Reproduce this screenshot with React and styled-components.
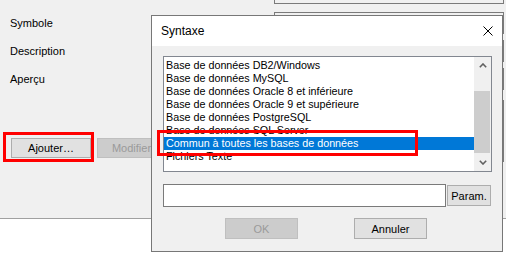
import React from 'react';
import styled, { createGlobalStyle } from 'styled-components';

const Global = createGlobalStyle`
  html, body { margin: 0; padding: 0; background: #ffffff; }
  body { font-family: "Liberation Sans", Arial, sans-serif; font-size: 11px; color: #000; }
  * { box-sizing: border-box; }
`;

const Screen = styled.div`
  position: relative;
  width: 506px;
  height: 257px;
  overflow: hidden;
  background: #ffffff;
`;

const FormPanel = styled.div`
  height: 219px;
  background: #f0f0f0;
  border-bottom: 1px solid #a0a0a0;
  padding-left: 10px;
  overflow: hidden;
  display: flex;
  flex-direction: column;
`;

const FieldRow = styled.div`
  display: flex;
  align-items: stretch;
  flex-shrink: 0;
  height: ${p => p.$h}px;
  margin-top: ${p => p.$mt}px;
`;

const LabelCell = styled.div`
  width: 264px;
  display: flex;
  align-items: ${p => (p.$end ? 'flex-end' : 'center')};
  padding-bottom: ${p => (p.$end ? 4 : 0)}px;
  gap: 6px;
  font-size: 11px;
`;

const FieldBox = styled.div`
  width: 230px;
  border: 1px solid #7a7a7a;
  background: #f0f0f0;
`;

const WinButton = styled.button`
  font-family: "Liberation Sans", Arial, sans-serif;
  font-size: 11px;
  width: ${p => p.$w}px;
  height: ${p => p.$h || 21}px;
  padding: 0;
  margin: 0;
  border: 1px solid ${p => (p.disabled ? '#bfbfbf' : '#adadad')};
  background: ${p => (p.disabled ? '#cccccc' : '#e1e1e1')};
  color: ${p => (p.disabled ? '#9a9a9a' : '#000')};
  display: flex;
  align-items: center;
  justify-content: center;
  flex-shrink: 0;
`;

const FirstButton = styled(WinButton)`
  margin-left: 1px;
`;

const Dialog = styled.div`
  position: absolute;
  left: 151px;
  top: 15px;
  width: 352px;
  height: 237px;
  border: 1px solid #777777;
  background: #f0f0f0;
  display: flex;
  flex-direction: column;
`;

const TitleBar = styled.div`
  height: 30px;
  flex-shrink: 0;
  background: #ffffff;
  display: flex;
  align-items: center;
  justify-content: space-between;
  padding: 0 9px 0 9px;
  font-size: 12px;
`;

const DialogBody = styled.div`
  flex: 1;
  display: flex;
  flex-direction: column;
  padding: 10px 10px 12px 11px;
`;

const ListBox = styled.div`
  width: 329px;
  height: 116px;
  border: 1px solid #828790;
  background: #ffffff;
  display: flex;
  flex-shrink: 0;
`;

const Items = styled.div`
  flex: 1;
  padding-top: 2px;
  overflow: hidden;
`;

const Item = styled.div`
  height: 13px;
  line-height: 13px;
  padding-left: 2px;
  white-space: nowrap;
  font-size: 10.75px;
  background: ${p => (p.$selected ? '#0078d7' : 'transparent')};
  color: ${p => (p.$selected ? '#ffffff' : '#000000')};
`;

const ScrollBar = styled.div`
  width: 17px;
  background: #f0f0f0;
  display: flex;
  flex-direction: column;
`;

const ArrowButton = styled.div`
  height: 17px;
  display: flex;
  align-items: center;
  justify-content: center;
  flex-shrink: 0;
`;

const Track = styled.div`
  flex: 1;
  padding: 17px 1px 0 0;
`;

const Thumb = styled.div`
  height: 62px;
  background: #cdcdcd;
`;

const EditRow = styled.div`
  display: flex;
  align-items: center;
  gap: 1px;
  margin-top: 12px;
`;

const Edit = styled.div`
  width: 283px;
  height: 23px;
  border: 1px solid #7a7a7a;
  background: #ffffff;
`;

const ActionRow = styled.div`
  display: flex;
  gap: 56px;
  margin-top: 11px;
  padding-left: 62px;
`;

const Highlight = styled.div`
  position: absolute;
  left: ${p => p.$x}px;
  top: ${p => p.$y}px;
  width: ${p => p.$w}px;
  height: ${p => p.$h}px;
  border: 3px solid #ff0000;
  pointer-events: none;
`;

const Chevron = ({ up }) => (
  <svg width="8" height="5" viewBox="0 0 8 5">
    <polyline
      points={up ? '0.8,4.2 4,1 7.2,4.2' : '0.8,0.8 4,4 7.2,0.8'}
      fill="none"
      stroke="#606060"
      strokeWidth="1.6"
    />
  </svg>
);

const CloseIcon = () => (
  <svg width="10" height="10" viewBox="0 0 10 10">
    <path d="M0.5 0.5 L9.5 9.5 M9.5 0.5 L0.5 9.5" stroke="#000" strokeWidth="1" />
  </svg>
);

const items = [
  'Base de données DB2/Windows',
  'Base de données MySQL',
  'Base de données Oracle 8 et inférieure',
  'Base de données Oracle 9 et supérieure',
  'Base de données PostgreSQL',
  'Base de données SQL Server',
  'Commun à toutes les bases de données',
  'Fichiers Texte',
];

export default function App() {
  return (
    <Screen>
      <Global />
      <FormPanel>
        <FieldRow $h={22} $mt={-18}>
          <LabelCell />
          <FieldBox />
        </FieldRow>
        <FieldRow $h={22} $mt={8}>
          <LabelCell>Symbole</LabelCell>
          <FieldBox />
        </FieldRow>
        <FieldRow $h={22} $mt={6}>
          <LabelCell>Description</LabelCell>
          <FieldBox />
        </FieldRow>
        <FieldRow $h={22} $mt={6}>
          <LabelCell>Aperçu</LabelCell>
          <FieldBox />
        </FieldRow>
        <FieldRow $h={62} $mt={10}>
          <LabelCell $end>
            <FirstButton $w={80} $h={20}>Ajouter…</FirstButton>
            <WinButton $w={80} $h={20} disabled>Modifier…</WinButton>
          </LabelCell>
          <FieldBox />
        </FieldRow>
      </FormPanel>

      <Dialog>
        <TitleBar>
          <span>Syntaxe</span>
          <CloseIcon />
        </TitleBar>
        <DialogBody>
          <ListBox>
            <Items>
              {items.map((t, i) => (
                <Item key={t} $selected={i === 6}>{t}</Item>
              ))}
            </Items>
            <ScrollBar>
              <ArrowButton><Chevron up /></ArrowButton>
              <Track><Thumb /></Track>
              <ArrowButton><Chevron /></ArrowButton>
            </ScrollBar>
          </ListBox>
          <EditRow>
            <Edit />
            <WinButton $w={44} $h={21}>Param.</WinButton>
          </EditRow>
          <ActionRow>
            <WinButton $w={73} disabled>OK</WinButton>
            <WinButton $w={73}>Annuler</WinButton>
          </ActionRow>
        </DialogBody>
      </Dialog>

      <Highlight $x={3} $y={132} $w={91} $h={30} />
      <Highlight $x={157} $y={130} $w={261} $h={26} />
    </Screen>
  );
}
